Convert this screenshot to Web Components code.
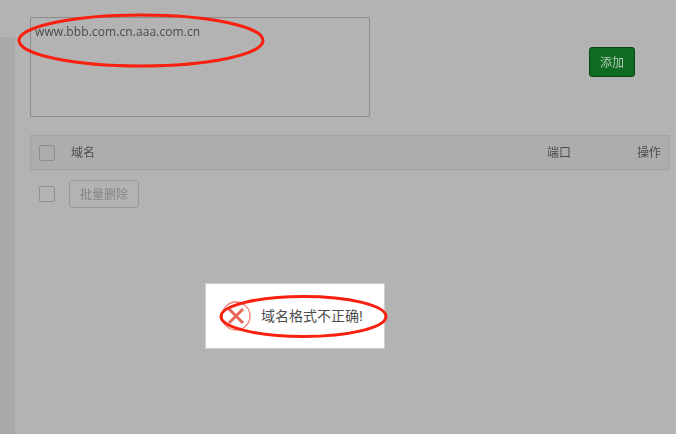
<!DOCTYPE html>
<html>
<head>
<meta charset="utf-8">
<style>
html, body { margin: 0; height: 100%; background: #b3b3b3; overflow: hidden; }
body { font: 12px "Liberation Sans", "Noto Sans CJK SC", sans-serif; color: #4a4a4a; }
</style>
</head>
<body>
<domain-page>
  <domain-form value="www.bbb.com.cn.aaa.com.cn"></domain-form>
  <domain-table></domain-table>
</domain-page>
<error-toast>域名格式不正确!</error-toast>
<ink-marks></ink-marks>

<script>
class domainPage extends HTMLElement {
  constructor () {
    super();
    const shadow = this.attachShadow({mode: 'open'});
    shadow.innerHTML = `
    <style>
      :host { display: flex; height: 434px; box-sizing: border-box; will-change: opacity; }
      .side { width: 15px; margin-top: 37px; background: #a9a9a9; flex: none; }
      .main { flex: 1; padding: 17px 6px 0 15px; min-width: 0; }
    </style>
    <div class="side"></div>
    <div class="main"><slot></slot></div>
    `;
  }
}

class domainForm extends HTMLElement {
  constructor () {
    super();
    const shadow = this.attachShadow({mode: 'open'});
    shadow.innerHTML = `
    <style>
      :host { display: flex; height: 118px; }
      .area {
        width: 340px; height: 100px; box-sizing: border-box;
        border: 1px solid #8c8c8c; border-radius: 2px;
        padding: 7px 4px; color: #4a4a4a; line-height: 14px;
        font-family: "Open Sans", "Noto Sans", sans-serif;
        letter-spacing: .08px;
      }
      .add {
        margin: 30px 0 0 219px; width: 46px; height: 30px; box-sizing: border-box;
        background: #0e6b22; border: 1px solid #0a4a18; border-radius: 3px;
        color: #b5c9b9; display: flex; align-items: center; justify-content: center;
        padding-bottom: 2px;
      }
    </style>
    <div class="area"></div>
    <div class="add">添加</div>
    `;
    shadow.querySelector(".area").textContent = this.getAttribute("value");
  }
}

class domainTable extends HTMLElement {
  constructor () {
    super();
    const shadow = this.attachShadow({mode: 'open'});
    shadow.innerHTML = `
    <style>
      :host { display: block; }
      .head {
        display: flex; align-items: center; height: 35px; box-sizing: border-box;
        border: 1px solid #a3a3a3; background: #adadad; color: #4d4d4d;
        padding-left: 8px;
      }
      .head span:not(.check) { padding-bottom: 2px; }
      .check {
        width: 16px; height: 16px; box-sizing: border-box; flex: none;
        border: 1px solid #8f8f8f; border-radius: 2px;
      }
      .name { margin-left: 16px; flex: 1; }
      .port { width: 90px; }
      .op { width: 32px; }
      .foot { display: flex; align-items: center; padding: 10px 0 0 9px; }
      .del {
        margin-left: 14px; width: 70px; height: 28px; box-sizing: border-box;
        border: 1px solid #979797; border-radius: 3px; color: #858585;
        display: flex; align-items: center; justify-content: center;
        padding-bottom: 2px;
      }
    </style>
    <div class="head">
      <span class="check"></span>
      <span class="name">域名</span>
      <span class="port">端口</span>
      <span class="op">操作</span>
    </div>
    <div class="foot">
      <span class="check"></span>
      <span class="del">批量删除</span>
    </div>
    `;
  }
}

class errorToast extends HTMLElement {
  constructor () {
    super();
    const shadow = this.attachShadow({mode: 'open'});
    shadow.innerHTML = `
    <style>
      :host {
        position: absolute; left: 205px; top: 283px; width: 180px; height: 66px;
        box-sizing: border-box; border: 1px solid #d0d0d0; background: #fff;
        display: flex; align-items: center; padding-left: 15px;
        font-size: 14px; color: #4d4d4d; will-change: opacity;
      }
      svg { flex: none; width: 30px; height: 30px; margin-right: 10px; }
      .msg { padding-bottom: 2px; }
    </style>
    <svg viewBox="0 0 30 30" fill="none">
      <circle cx="15" cy="15" r="14" stroke="#ea7f76" stroke-width="1.3"/>
      <path d="M8 8 L22 22 M22 8 L8 22" stroke="#e8665c" stroke-width="3"/>
    </svg>
    <span class="msg"><slot></slot></span>
    `;
  }
}

class inkMarks extends HTMLElement {
  constructor () {
    super();
    const shadow = this.attachShadow({mode: 'open'});
    shadow.innerHTML = `
    <style>
      :host { position: absolute; left: 0; top: 0; width: 676px; height: 434px; pointer-events: none; }
      svg { display: block; }
    </style>
    <svg width="676" height="434" fill="none" stroke="#f8200f" stroke-width="3">
      <ellipse cx="141" cy="40.500" rx="122" ry="25.500"/>
      <ellipse cx="303.500" cy="316.500" rx="82.500" ry="20"/>
    </svg>
    `;
  }
}

customElements.define("domain-page", domainPage);
customElements.define("domain-form", domainForm);
customElements.define("domain-table", domainTable);
customElements.define("error-toast", errorToast);
customElements.define("ink-marks", inkMarks);
</script>
</body>
</html>
